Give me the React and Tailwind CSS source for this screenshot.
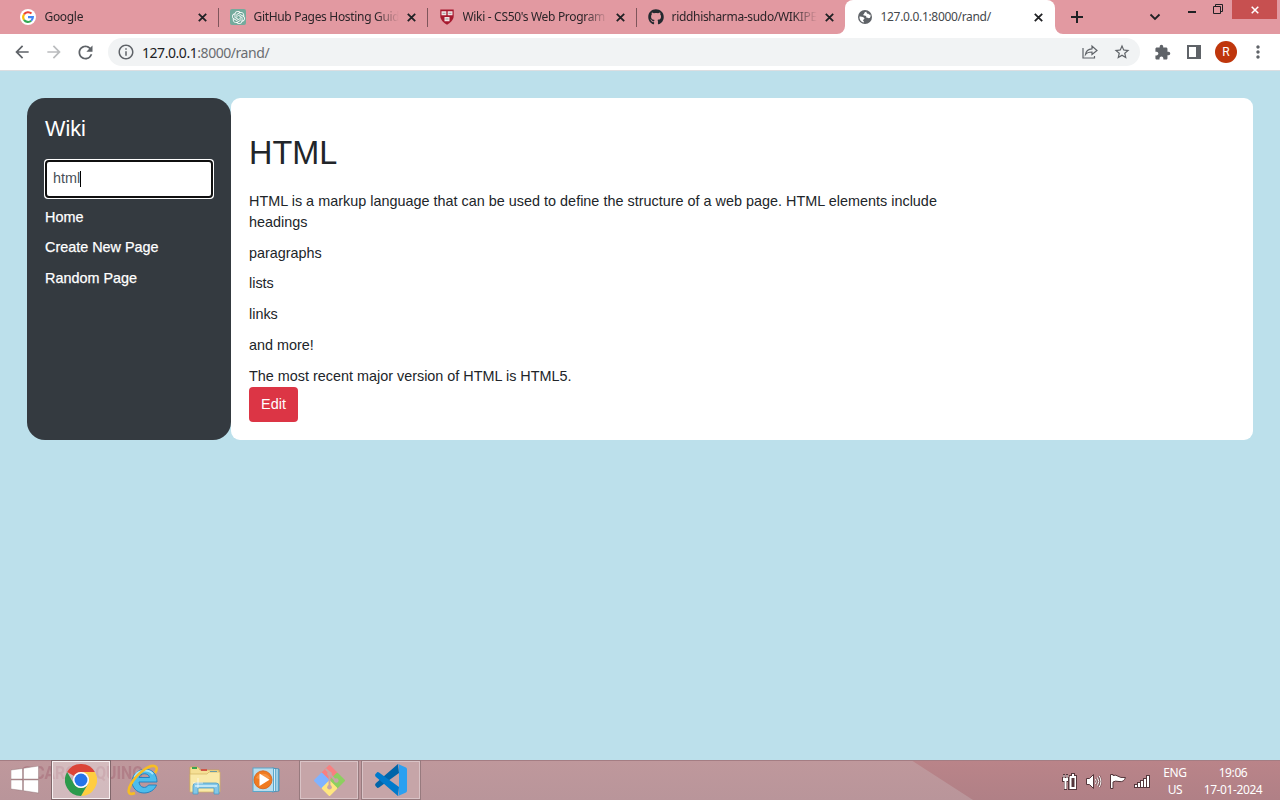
import React from "react";
import { MdArrowBack, MdArrowForward, MdRefresh, MdExtension, MdStarBorder, MdInfoOutline, MdMoreVert } from "react-icons/md";
import { FaGithub } from "react-icons/fa";
import { SiOpenai } from "react-icons/si";

function Cross({ color = "#202124", size = 9, w = 1.8 }) {
  return (
    <svg width={size} height={size} viewBox="0 0 9 9" className="block">
      <path d="M0.8 0.8 8.2 8.2M8.2 0.8 0.8 8.2" stroke={color} strokeWidth={w} fill="none" />
    </svg>
  );
}

function GoogleIcon() {
  return (
    <svg width="16" height="16" viewBox="0 0 16 16" className="block">
      <circle cx="8" cy="8" r="8" fill="#fff" />
      <g fill="none" strokeWidth="2.1">
        <path d="M4 5.4A4.9 4.9 0 0 1 11.5 4.6" stroke="#ea4335" />
        <path d="M4 5.4A4.9 4.9 0 0 0 4 10.8" stroke="#fbbc05" />
        <path d="M4 10.8A4.9 4.9 0 0 0 11.2 11.8" stroke="#34a853" />
        <path d="M8 8.1H12.9A4.9 4.9 0 0 1 11.2 11.8" stroke="#4285f4" />
      </g>
    </svg>
  );
}

function GlobeIcon() {
  return (
    <svg width="14" height="14" viewBox="0 0 14 14" className="block shrink-0">
      <circle cx="7" cy="7" r="7" fill="#5f6368" />
      <path d="M8.500 1.700C6.500 2 5.800 3 6.200 4 4.800 4 5 5.300 6 5.600 8 5.500 8.500 6.500 8.300 7.500 9.500 7.600 10 8.500 11.800 8 12.600 7.500 12.800 6 12.300 4.600 11.500 4.800 10.800 4.500 10.500 3.800 9.500 4 8.300 3.200 8.500 1.700Z" fill="#fff" />
      <path d="M1.500 6.500C3.500 6.300 6.300 7 6.500 8.600 6.200 9.500 5.300 9.500 5 10.500 5.800 11 6 11.500 5.800 12.400 3 12 1.300 9.500 1.500 6.500Z" fill="#fff" />
    </svg>
  );
}

function ShieldIcon() {
  return (
    <svg width="14" height="16" viewBox="0 0 14 16" className="block">
      <path d="M0.300 0.500H13.700V7C13.700 11 10 14 7 15.700 4 14 .3 11 .3 7Z" fill="#a6192e" />
      <path d="M1.500 2.300H6.300V6.300H1.500ZM7.700 2.300H12.500V6.300H7.700ZM4.500 8H9.500V12.300H4.500Z" fill="#f3e4e6" />
      <path d="M2.500 4.300H5.500M8.500 4.300H11.500M5.500 10H8.500" stroke="#999" strokeWidth="1" />
    </svg>
  );
}

function Tab({ icon, title, active, sep }) {
  return (
    <div className={"relative flex h-[34px] shrink-0 items-center " + (active ? "-ml-px w-[210px] rounded-t-lg bg-white pl-[12px]" : "w-[209px] pl-[11px]")}>
      <div className="flex w-4 shrink-0 justify-center">{icon}</div>
      <div className={"ml-[7.500px] w-[145px] shrink-0 text-[12px] whitespace-nowrap " + (active ? "text-[#45484c]" : "text-[#2c2529] [mask-image:linear-gradient(to_right,black_84%,transparent)]")}>{title}</div>
      <div className="ml-[8px]"><Cross /></div>
      {sep && <div className="absolute top-2 right-0 h-[19px] w-px bg-[#7f555b]" />}
      {active && (
        <>
          <svg className="absolute bottom-0 -left-2" width="8" height="8"><path d="M8 0V8H0A8 8 0 0 0 8 0Z" fill="#fff" /></svg>
          <svg className="absolute -right-2 bottom-0" width="8" height="8"><path d="M0 0V8H8A8 8 0 0 1 0 0Z" fill="#fff" /></svg>
        </>
      )}
    </div>
  );
}

function TabStrip() {
  return (
    <div className="flex h-[34px] shrink-0 bg-[#e299a1] pl-[10px] font-['Noto_Sans',sans-serif] tracking-[-0.32px]">
      <Tab icon={<div className="-ml-0.5"><GoogleIcon /></div>} title="Google" sep />
      <Tab
        icon={<div className="flex size-4 items-center justify-center rounded-[2px] bg-[#74aa9c]"><SiOpenai size={13} color="#fff" /></div>}
        title="GitHub Pages Hosting Guid" sep
      />
      <Tab icon={<ShieldIcon />} title="Wiki - CS50's Web Program" sep />
      <Tab icon={<FaGithub size={16} color="#24292f" className="shrink-0" />} title="riddhisharma-sudo/WIKIPE" />
      <Tab icon={<GlobeIcon />} title="127.0.0.1:8000/rand/" active />
      <div className="flex flex-1 pl-4">
        <svg width="12" height="34" className="block"><path d="M6 11V23M0 17H12" stroke="#202124" strokeWidth="2" /></svg>
        <svg width="12" height="34" className="ml-[66px] block"><path d="M1.5 14.5 6 19 10.5 14.5" stroke="#202124" strokeWidth="1.8" fill="none" /></svg>
        <svg width="9" height="34" className="ml-[27px] block"><path d="M0 12H8" stroke="#202124" strokeWidth="2" /></svg>
        <svg width="11" height="34" className="ml-[16px] block"><path d="M.5 6.5H7.5V13.5H.5ZM2.5 6.5V4.5H9.5V11.5H7.5" stroke="#202124" fill="none" /></svg>
        <div className="mr-[3px] ml-auto flex h-[19px] w-[45px] items-center justify-center self-start bg-[#c75050]"><Cross color="#fff" w={1.7} size={8} /></div>
      </div>
    </div>
  );
}

function Toolbar() {
  return (
    <div className="flex h-[37px] shrink-0 items-center border-b border-[#dcdee1] bg-white pl-3 font-['Noto_Sans',sans-serif]">
      <MdArrowBack size={20} color="#5f6368" />
      <MdArrowForward size={20} color="#babcbe" className="ml-3" />
      <MdRefresh size={21} color="#5f6368" className="ml-[11px]" />
      <div className="ml-3 flex h-7 w-[1032px] items-center rounded-full bg-[#f1f3f4] pl-[9px]">
        <MdInfoOutline size={18} color="#5f6368" />
        <div className="ml-[7px] text-[14px] tracking-[-0.45px] text-[#6a6d71]"><span className="text-[#202124]">127.0.0.1</span>:8000/rand/</div>
        <svg width="16" height="16" viewBox="0 0 16 16" className="mr-[15px] ml-auto block" fill="none" stroke="#5f6368" strokeWidth="1.2">
          <path d="M1 4V14H12.5V12M3.500 10.500C4 6.500 6.500 5 10 4.800V2L15 6.500 10 10.500V8C7 8 5 8.500 3.500 10.500Z" />
        </svg>
        <MdStarBorder size={18} color="#5f6368" className="mr-[9px]" />
      </div>
      <MdExtension size={17} color="#5f6368" className="ml-[14px]" />
      <div className="ml-4 size-[14px] border-2 border-r-[5px] border-[#5f6368]" />
      <div className="ml-[14px] flex size-[22px] items-center justify-center rounded-full bg-[#bf360c] font-[Roboto,sans-serif] text-[12px] text-white">R</div>
      <MdMoreVert size={20} color="#5f6368" className="ml-[11px]" />
    </div>
  );
}

function Sidebar() {
  return (
    <aside className="w-[204px] shrink-0 rounded-[18px] bg-[#343a40] px-[18px] pt-[18px] text-[14.4px] leading-[21.6px] text-white">
      <h2 className="text-[21.6px] leading-[26px]">Wiki</h2>
      <div className="-mx-px mt-[17px] flex h-[40px] rounded-[4px] bg-white p-px">
        <div className="flex flex-1 items-center rounded-[4px] border-2 border-[#101010] bg-white pb-px pl-[6px] text-[#495057]">
          html<span className="h-4 w-px bg-black" />
        </div>
      </div>
      <nav className="mt-[7.500px] flex flex-col gap-[9px] font-normal [-webkit-text-stroke:0.25px_white]">
        <a>Home</a><a>Create New Page</a><a>Random Page</a>
      </nav>
    </aside>
  );
}

function Article() {
  return (
    <main className="h-[342px] flex-1 rounded-[9px] bg-white pt-[36px] pl-[18px] text-[14.4px] leading-[21.6px] text-[#212529]">
      <h1 className="text-[32.4px] leading-[39px]">HTML</h1>
      <div className="mt-[17.500px] flex w-[700px] flex-col gap-[9.1px]">
        <p className="tracking-[0.01px]">HTML is a markup language that can be used to define the structure of a web page. HTML elements include<br />headings</p>
        <p>paragraphs</p><p>lists</p><p>links</p><p>and more!</p>
        <p>The most recent major version of HTML is HTML5.</p>
      </div>
      <button className="block h-[35px] w-[49px] rounded-[4px] bg-[#dc3545] text-white">Edit</button>
    </main>
  );
}

function ChromeLogo() {
  return (
    <svg width="32" height="32" viewBox="0 0 32 32" className="block">
      <path d="M2.140 8A16 16 0 0 1 29.860 8H16A8 8 0 0 0 9.070 12Z" fill="#db4437" />
      <path d="M29.860 8A16 16 0 0 1 16 32L22.930 20A8 8 0 0 0 16 8Z" fill="#ffcd40" />
      <path d="M2.140 8A16 16 0 0 0 16 32L22.930 20A8 8 0 0 1 9.070 20Z" fill="#2c9a4b" />
      <circle cx="16" cy="16" r="8" fill="#fff" /><circle cx="16" cy="16" r="6.500" fill="#2674e8" />
    </svg>
  );
}

function IeLogo() {
  return (
    <svg width="32" height="32" viewBox="0 0 32 32" className="block">
      <path d="M30 18H12C12.500 24 19 25 21.500 21H29.500C26 31 8 33 5 19 4 3 30 -1 30 18ZM12 13.500H22.500C22 8.500 13 8.500 12 13.500Z" fill="#4dbdec" stroke="#1c7fc0" strokeWidth=".9" />
      <path d="M7.500 13C10 6 21 4 26 10" stroke="#a5e6fb" strokeWidth="2" fill="none" />
      <path d="M8 29C1 32 0 27 4 20 9 11 21 1 27 2 31 3 30 6 28 9" stroke="#f6bd25" strokeWidth="2.600" fill="none" />
    </svg>
  );
}

function FolderIcon() {
  return (
    <svg width="34" height="32" viewBox="0 0 34 32" className="block">
      <path d="M2 4H12V7H19V9H32V27H2Z" fill="#eacb70" />
      <path d="M2 3H10L12 6H31V26H2Z" fill="#f5df94" stroke="#caa650" strokeWidth=".7" />
      <path d="M4 4H9" stroke="#3ba44f" strokeWidth="2" /><path d="M13 6H19" stroke="#d05546" strokeWidth="2" /><path d="M22 8H29" stroke="#338fc8" strokeWidth="2" />
      <path d="M2 10H19L21 8H32V28H2Z" fill="#f9e9a8" stroke="#d2b561" strokeWidth=".7" />
      <path d="M5 30V22Q5 19 8 19H28Q31 19 31 22V30H26V24H10V30Z" fill="#83c7e7" stroke="#4b9cc6" strokeWidth=".8" />
      <path d="M7 22H29" stroke="#d3f1fc" strokeWidth="1.500" /><path d="M10 14V24M5 19H15" stroke="#fff" strokeWidth=".7" />
    </svg>
  );
}

function MediaIcon() {
  return (
    <svg width="30" height="28" viewBox="0 0 30 28" className="block">
      <path d="M20 2 27 3V25L20 26Z" fill="#68afd2" stroke="#388bb5" strokeWidth=".7" /><path d="M22.500 3V25M25 3V25" stroke="#d6edf6" />
      <rect x="1" y="2" width="20.500" height="23.500" fill="#b8deef" stroke="#5aa6ca" />
      <circle cx="11" cy="13.800" r="9" fill="#f07a20" stroke="#d4611a" strokeWidth=".8" /><path d="M4 12A8 8 0 0 1 18 12Q11 15 4 12Z" fill="#f8a35b" opacity=".6" />
      <path d="M7.500 7.500V20L17.500 13.800Z" fill="#fff" />
    </svg>
  );
}

function GitIcon() {
  return (
    <svg width="33" height="33" viewBox="0 0 34 34" className="block">
      <path d="M17 2 24 9 17 16 10 9Z" fill="#f78080" stroke="#f78080" strokeWidth="2" strokeLinejoin="round" />
      <path d="M9 10 16 17 9 24 2 17Z" fill="#80b3ff" stroke="#80b3ff" strokeWidth="2" strokeLinejoin="round" />
      <path d="M25 10 32 17 25 24 18 17Z" fill="#8dcf60" stroke="#8dcf60" strokeWidth="2" strokeLinejoin="round" />
      <path d="M17 18 24 25 17 32 10 25Z" fill="#ffe680" stroke="#ffe680" strokeWidth="2" strokeLinejoin="round" />
      <path d="M13 5 17 9V24M17 10 23 17" stroke="#c6a5a8" strokeWidth="2" fill="none" />
      <g fill="#c6a5a8"><circle cx="17" cy="10" r="2.400" /><circle cx="17" cy="24" r="2.400" /><circle cx="24" cy="17" r="2.400" /></g>
    </svg>
  );
}

function VsCodeIcon() {
  return (
    <svg width="32" height="32" viewBox="0 0 32 32" className="block">
      <path d="M23 0 24 9 4 23.500Q2.500 24.500 1.500 23L.5 22Q-.5 20.500 1 19Z" fill="#0065a9" />
      <path d="M23 32 24 23 4 8.500Q2.500 7.500 1.500 9L.5 10Q-.5 11.500 1 13Z" fill="#007acc" />
      <path d="M23 0 31 3.500Q32 4 32 5.500V26.500Q32 28 31 28.500L23 32Q24 31 24 29V3Q24 1 23 0Z" fill="#2ba0f0" />
    </svg>
  );
}

function TrayIcons() {
  return (
    <div className="flex items-center gap-[8px] pt-[3px]">
      <svg width="17" height="18" viewBox="0 0 17 18" className="block">
        <path d="M1 4H2V1H4V4H5V1H7V4H8V2H10V0H14V2H16V17H7V9H6V17H3V9H1Z" fill="#54363b" />
        <path d="M2 5H7V8H5.500V16H3.500V8H2ZM2.500 2H3.500V5H2.500ZM5.500 2H6.500V5H5.500ZM9 3H11V1H13V3H15V16H8.500V4ZM10.500 5V14H13.500V5Z" fill="#fff" fillRule="evenodd" />
      </svg>
      <svg width="16" height="18" viewBox="0 0 16 18" className="block">
        <path d="M.5 5.500H3.500L7.500 1.500V15.500L3.500 11.500H.5Z" fill="#fff" stroke="#54363b" />
        <path d="M9.500 6Q11 8.500 9.500 11M11.500 4.500Q14 8.500 11.500 12.500M13.300 3Q16.500 8.500 13.300 14" stroke="#7d555a" strokeWidth="2.200" fill="none" />
        <path d="M9.500 6Q11 8.500 9.500 11M11.500 4.500Q14 8.500 11.500 12.500M13.300 3Q16.500 8.500 13.300 14" stroke="#fff" fill="none" />
      </svg>
      <svg width="16" height="18" viewBox="0 0 16 18" className="block"><path d="M.5 1.500H3V2.500Q6 1.500 8 3.200 10 5 15.500 4.500 14 9.500 9 8.500 5 7.500 3 9V15.500H.5Z" fill="#fff" stroke="#54363b" /></svg>
      <svg width="16" height="18" viewBox="0 0 16 18" className="block"><path d="M0 11H3V9H6V7H9V5H12V2H16V15H0Z" fill="#54363b" /><path d="M2 12V14M5 10V14M8 8V14M11 6V14M14 3V14" stroke="#fff" strokeWidth="2" /></svg>
    </div>
  );
}

function Taskbar() {
  return (
    <footer className="relative flex h-10 shrink-0 overflow-hidden bg-linear-to-b from-[#ba8489] to-[#b08086] font-['Noto_Sans',sans-serif]">
      <svg className="absolute inset-0" width="1280" height="40">
        <defs><linearGradient id="bar" x1="0" y1="0" x2="0" y2="1"><stop offset="0" stopColor="#bf989c" /><stop offset="1" stopColor="#b9959a" /></linearGradient></defs>
        <path d="M0 0H911L973 40H0Z" fill="url(#bar)" /><path d="M0 .5H1280" stroke="#a47d83" />
      </svg>
      <span className="absolute top-[-1px] left-[20px] origin-left scale-x-[0.83] font-[Roboto,sans-serif] text-[19px] font-bold text-[#b17f88]">@CAROLAQUINO</span>
      <div className="relative flex flex-1 items-center">
        <svg width="28" height="28" viewBox="0 0 28 28" className="ml-[11px] block"><path d="M0 4 11.500 2.500V13H0ZM12.500 2.300 27.500 0V13H12.500ZM0 14H11.500V24.500L0 23ZM12.500 14H27.500V27L12.500 24.700Z" fill="#fff" stroke="#795d61" strokeWidth=".35" /></svg>
        <div className="ml-[12px] flex h-10 w-[60px] items-center justify-center border border-[#80666a] bg-white/35 shadow-[inset_0_0_0_1px_#f8f0f1]"><ChromeLogo /></div>
        <div className="ml-[16px]"><IeLogo /></div>
        <div className="ml-[29px]"><FolderIcon /></div>
        <div className="ml-[30px]"><MediaIcon /></div>
        <div className="ml-[17px] flex h-10 w-[60px] items-center justify-center border border-[#977a7e] bg-[#c6a5a8] shadow-[inset_0_0_0_1px_#d9c3c6]"><GitIcon /></div>
        <div className="ml-[2px] flex h-10 w-[60px] items-center justify-center border border-[#977a7e] bg-[#c6a5a8] shadow-[inset_0_0_0_1px_#d9c3c6]"><VsCodeIcon /></div>
      </div>
      <div className="relative flex items-center pt-px text-center text-[12px] leading-[17px] tracking-[-0.4px] text-white">
        <TrayIcons />
        <div className="ml-3 w-[26px]">ENG<br />US</div>
        <div className="mr-[15px] ml-[13px] w-[64px]">19:06<br />17-01-2024</div>
      </div>
    </footer>
  );
}

export default function App() {
  return (
    <div className="flex h-[800px] w-[1280px] flex-col overflow-hidden bg-[#bce0eb] font-['Liberation_Sans',Arial,sans-serif]">
      <TabStrip />
      <Toolbar />
      <div className="flex flex-1 items-start px-[27px] pt-[27px]">
        <div className="flex flex-1"><Sidebar /><Article /></div>
      </div>
      <Taskbar />
    </div>
  );
}
